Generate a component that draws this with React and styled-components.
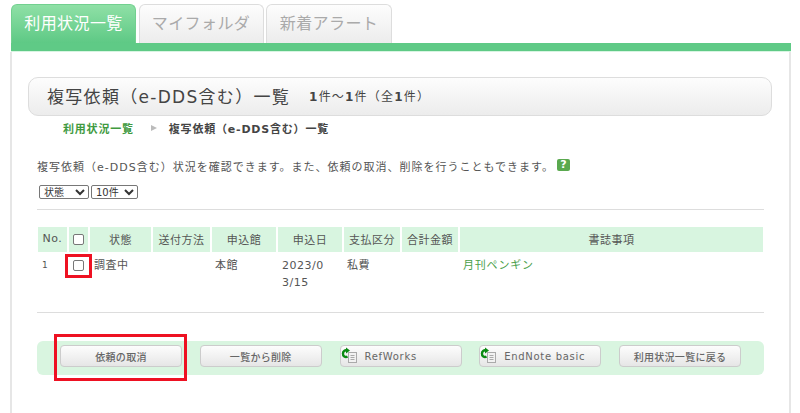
import React from "react";
import styled, { createGlobalStyle } from "styled-components";

const GlobalStyle = createGlobalStyle`
  html, body {
    margin: 0;
    padding: 0;
    background: #fff;
    overflow: hidden;
  }
  body {
    font-family: "DejaVu Sans", "Noto Sans CJK JP", sans-serif;
    color: #555;
  }
`;

const Page = styled.div`
  width: 781px;
  height: 413px;
  margin-left: 10px;
  padding-top: 4px;
  box-sizing: border-box;
  position: relative;
  display: flex;
  flex-direction: column;
`;

const Tabs = styled.div`
  display: flex;
  gap: 2.5px;
  padding-left: 1px;
  height: 39px;
`;

const Tab = styled.div`
  width: ${({ $width }) => $width}px;
  box-sizing: border-box;
  border-radius: 6px 6px 0 0;
  display: flex;
  justify-content: center;
  align-items: center;
  padding-bottom: 5px;
  font-size: 16px;
  letter-spacing: 0.4px;
  border: 1px solid ${({ $active }) => ($active ? "#72d08f" : "#ddd")};
  border-bottom: 0;
  color: ${({ $active }) => ($active ? "#fff" : "#aaa")};
  background: ${({ $active }) =>
    $active
      ? "linear-gradient(#8fe0a6, #5ec985)"
      : "linear-gradient(#fdfdfd, #ececec)"};
`;

const TabLine = styled.div`
  height: 8px;
  margin-left: 1px;
  background: #5fca86;
  border-bottom: 1px solid #d8f5e2;
`;

const Panel = styled.div`
  flex: 1;
  border-left: 2px solid #e6e6e6;
  border-right: 2px solid #e6e6e6;
  padding: 25px 17px 0 16px;
  position: relative;
`;

const TitleBox = styled.div`
  height: 39px;
  box-sizing: border-box;
  border: 1px solid #ddd;
  border-radius: 10px;
  background: linear-gradient(#fdfdfd, #ececec);
  display: flex;
  align-items: center;
  padding: 0 0 2px 18px;
  color: #444;
`;

const Heading = styled.h1`
  margin: 0;
  font-size: 17px;
  font-weight: 400;
  letter-spacing: 1.3px;
  color: #444;
`;

const Count = styled.span`
  margin-left: 19px;
  font-size: 12px;
  letter-spacing: 1.2px;
  color: #444;
`;

const Crumbs = styled.div`
  display: flex;
  align-items: center;
  height: 14px;
  margin-top: 5px;
  padding-left: 35px;
  font-size: 11px;
  font-weight: 700;
  letter-spacing: 0.8px;
  color: #444;
`;

const CrumbLink = styled.span`
  color: #3f9a3f;
`;

const CrumbArrow = styled.span`
  width: 0;
  height: 0;
  margin: 0 12px 0 17px;
  border-left: 6px solid #bbb;
  border-top: 3.5px solid transparent;
  border-bottom: 3.5px solid transparent;
`;

const Lead = styled.p`
  margin: 22px 0 0 9px;
  display: flex;
  align-items: center;
  height: 18px;
  font-size: 11px;
  letter-spacing: 1px;
  color: #555;
`;

const Help = styled.span`
  width: 13px;
  height: 12px;
  margin: 0 0 3px 3px;
  border-radius: 2px;
  background: #5aa94f;
  color: #fff;
  font-size: 11px;
  font-weight: 700;
  line-height: 12px;
  text-align: center;
  letter-spacing: 0;
`;

const Filters = styled.div`
  display: flex;
  gap: 2px;
  margin: 10px 0 0 11px;
`;

const Select = styled.select`
  width: ${({ $width }) => $width}px;
  height: 14px;
  padding: 0;
  font-family: "DejaVu Sans", "Noto Sans CJK JP", sans-serif;
  font-size: 10px;
  color: #333;
  background: #fff;
  border: 1px solid #777;
  border-radius: 2px;
`;

const Rule = styled.hr`
  margin: ${({ $top }) => $top}px 0 0 9px;
  width: 727px;
  border: 0;
  border-top: 1px solid #ddd;
`;

const Table = styled.table`
  margin: 15px 0 0 8px;
  width: 729px;
  table-layout: fixed;
  border-collapse: separate;
  border-spacing: 2px;
  font-size: 11px;
  letter-spacing: 0.5px;
  color: #555;
`;

const Head = styled.th`
  width: ${({ $width }) => $width}px;
  height: 25px;
  padding: 0 0 2px;
  box-sizing: border-box;
  background: #d8f5e0;
  font-weight: 400;
  text-align: center;
  color: #555;
`;

const Cell = styled.td`
  height: 45px;
  padding: 3px ${({ $right }) => $right ?? 3}px 0 ${({ $left }) => $left ?? 3}px;
  box-sizing: border-box;
  vertical-align: top;
  line-height: 17px;
  word-break: break-all;
  text-align: left;
  font-size: ${({ $small }) => ($small ? "9px" : "inherit")};
`;

const CheckCell = styled.td`
  height: 45px;
  padding: 4px 0 0;
  box-sizing: border-box;
  vertical-align: top;
  text-align: center;
`;

const PaperLink = styled.span`
  color: #4aa04a;
  letter-spacing: 0.8px;
`;

const Check = styled.input.attrs({ type: "checkbox" })`
  width: 11px;
  height: 11px;
  margin: 0;
  appearance: none;
  box-sizing: border-box;
  border: 1px solid #777;
  border-radius: 2px;
  background: #fff;
  vertical-align: middle;
`;

const ButtonBar = styled.div`
  margin: 28px 0 0 9px;
  width: 727px;
  height: 34px;
  box-sizing: border-box;
  padding: 4px 0 0 23px;
  border-radius: 6px;
  background: #d9f5e0;
  display: flex;
  gap: 17.75px;
`;

const Button = styled.div`
  width: 122px;
  height: 22px;
  box-sizing: border-box;
  padding-left: ${({ $icon }) => ($icon ? "24px" : 0)};
  border: 1px solid #ccc;
  border-radius: 4px;
  background: linear-gradient(#fdfdfd, #e6e6e6);
  position: relative;
  display: flex;
  justify-content: ${({ $icon }) => ($icon ? "flex-start" : "center")};
  align-items: center;
  font-size: 10px;
  font-weight: 500;
  letter-spacing: ${({ $icon }) => ($icon ? "0.7px" : "0.3px")};
  color: #666;
`;

const RefIcon = styled.svg`
  position: absolute;
  left: 0;
  top: 0;
`;

const Highlight = styled.div`
  position: absolute;
  left: ${({ $x }) => $x}px;
  top: ${({ $y }) => $y}px;
  width: ${({ $w }) => $w}px;
  height: ${({ $h }) => $h}px;
  box-sizing: border-box;
  border: 3px solid #ee1122;
`;

const ExportIcon = () => (
  <RefIcon width="18" height="18" viewBox="0 0 18 18">
    <rect x="7.5" y="6.5" width="8" height="10" fill="#f2f2f2" stroke="#aaa" />
    <path d="M9.5 9.5h4M9.5 11.5h4M9.5 13.5h4" stroke="#aaa" />
    <path d="M6 4.5A3 3 0 0 0 2 7.5 3 3 0 0 0 6.5 10.5" fill="none" stroke="#0a8a12" strokeWidth="2.4" />
    <path d="M5 1.5 9 4.5 5 7.5Z" fill="#0a8a12" />
  </RefIcon>
);

const columns = [
  ["No.", 29],
  [null, 19],
  ["状態", 61],
  ["送付方法", 57],
  ["申込館", 64],
  ["申込日", 64],
  ["支払区分", 56],
  ["合計金額", 56],
  ["書誌事項", 303],
];

const App = () => (
  <>
    <GlobalStyle />
    <Page>
      <Tabs>
        <Tab $width={125} $active>利用状況一覧</Tab>
        <Tab $width={125}>マイフォルダ</Tab>
        <Tab $width={126}>新着アラート</Tab>
      </Tabs>
      <TabLine />
      <Panel>
        <TitleBox>
          <Heading>複写依頼（e-DDS含む）一覧</Heading>
          <Count><b>1</b>件～<b>1</b>件（全<b>1</b>件）</Count>
        </TitleBox>
        <Crumbs>
          <CrumbLink>利用状況一覧</CrumbLink>
          <CrumbArrow />
          複写依頼（e-DDS含む）一覧
        </Crumbs>
        <Lead>
          複写依頼（e-DDS含む）状況を確認できます。また、依頼の取消、削除を行うこともできます。
          <Help>?</Help>
        </Lead>
        <Filters>
          <Select $width={50}><option>状態</option></Select>
          <Select $width={47}><option>10件</option></Select>
        </Filters>
        <Rule $top={10} />
        <Table>
          <thead>
            <tr>
              {columns.map(([label, width], i) => (
                <Head key={i} $width={width}>{label ?? <Check readOnly />}</Head>
              ))}
            </tr>
          </thead>
          <tbody>
            <tr>
              <Cell $small $left={4}>1</Cell>
              <CheckCell><Check readOnly /></CheckCell>
              <Cell $left={4}>調査中</Cell>
              <Cell />
              <Cell>本館</Cell>
              <Cell $left={4} $right={12}>2023/03/15</Cell>
              <Cell>私費</Cell>
              <Cell />
              <Cell><PaperLink>月刊ペンギン</PaperLink></Cell>
            </tr>
          </tbody>
        </Table>
        <Rule $top={11} />
        <ButtonBar>
          <Button>依頼の取消</Button>
          <Button>一覧から削除</Button>
          <Button $icon><ExportIcon />RefWorks</Button>
          <Button $icon><ExportIcon />EndNote basic</Button>
          <Button>利用状況一覧に戻る</Button>
        </ButtonBar>
      </Panel>
      <Highlight $x={55} $y={254} $w={27} $h={24} />
      <Highlight $x={44} $y={334} $w={133} $h={47} />
    </Page>
  </>
);

export default App;
